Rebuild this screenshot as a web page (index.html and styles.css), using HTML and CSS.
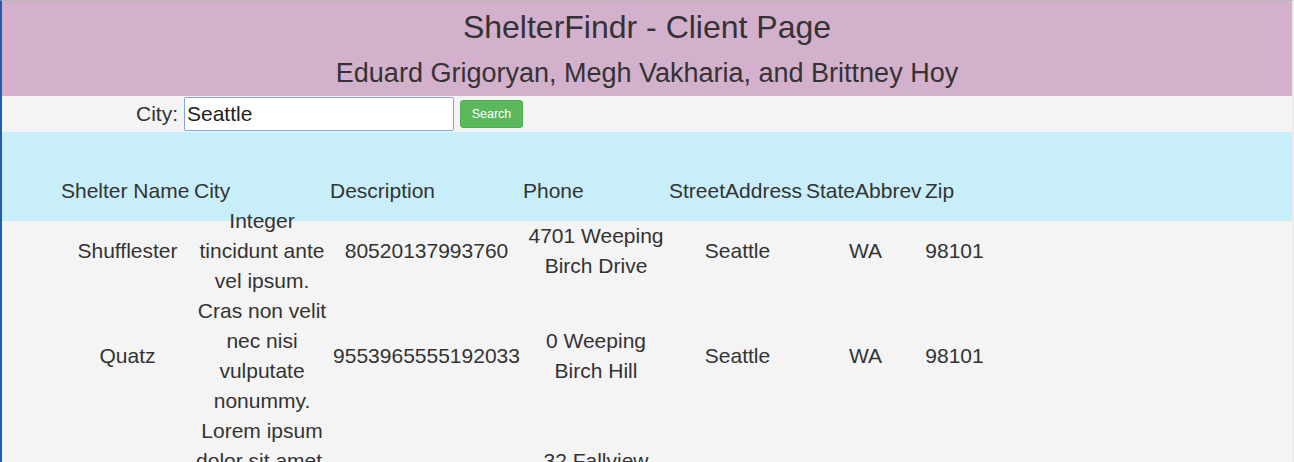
FILE: index.html
```html
<!DOCTYPE html>
<html lang="en">
<head>
<meta charset="utf-8">
<title>ShelterFindr - Client Page</title>
<link rel="stylesheet" href="styles.css">
</head>
<body>
<div class="frame">
  <header class="masthead">
    <h1 class="title">ShelterFindr - Client Page</h1>
    <h2 class="authors">Eduard Grigoryan, Megh Vakharia, and Brittney Hoy</h2>
  </header>
  <form class="search">
    <label class="search-label" for="city">City:</label>
    <input class="search-input" id="city" type="text" value="Seattle">
    <button class="search-btn" type="button">Search</button>
  </form>
  <section class="results">
    <table class="shelters">
      <colgroup>
        <col class="c-name"><col class="c-city"><col class="c-desc"><col class="c-phone"><col class="c-street"><col class="c-state"><col class="c-zip">
      </colgroup>
      <thead>
        <tr>
          <th>Shelter Name</th><th>City</th><th>Description</th><th>Phone</th><th>StreetAddress</th><th>StateAbbrev</th><th>Zip</th>
        </tr>
      </thead>
      <tbody>
        <tr>
          <td>Shufflester</td><td>Integer tincidunt ante vel ipsum.</td><td>80520137993760</td><td>4701 Weeping Birch Drive</td><td>Seattle</td><td>WA</td><td>98101</td>
        </tr>
        <tr>
          <td>Quatz</td><td>Cras non velit nec nisi vulputate nonummy.</td><td>9553965555192033</td><td>0 Weeping Birch Hill</td><td>Seattle</td><td>WA</td><td>98101</td>
        </tr>
        <tr>
          <td>Voyatouch</td><td>Lorem ipsum dolor sit amet, consectetuer adipiscing elit.</td><td>4017953521</td><td>32 Fallview Court</td><td>Seattle</td><td>WA</td><td>98101</td>
        </tr>
      </tbody>
    </table>
  </section>
</div>
</body>
</html>
```
FILE: styles.css
```css
html {
  overflow: hidden;
}

body {
  margin: 0;
  background: #f4f4f4;
  font-family: "Liberation Sans", Arial, sans-serif;
  color: #333333;
}

.frame {
  border-top: 1px solid #b9b9b9;
  border-left: 2px solid #1f5cb8;
  border-right: 2px solid #eeeaee;
  min-height: 461px;
  background: #f4f4f4;
}

.masthead {
  background: #d3b0cc;
  text-align: center;
  padding: 9px 0 8px;
}

.title {
  margin: 0;
  font-size: 32px;
  font-weight: normal;
  line-height: 35px;
}

.authors {
  margin: 13px 0 0;
  font-size: 27px;
  font-weight: normal;
  line-height: 30px;
}

.search {
  display: flex;
  align-items: center;
  gap: 6px;
  height: 36px;
  padding-left: 134px;
  margin: 0;
}

.search-label {
  font-size: 21px;
  line-height: 30px;
}

.search-input {
  box-sizing: border-box;
  width: 270px;
  height: 34px;
  margin: 0;
  padding: 0 2px;
  border: 1px solid #7ea6e6;
  border-radius: 2px;
  background: #ffffff;
  font-family: "Liberation Sans", Arial, sans-serif;
  font-size: 21px;
  color: #222222;
  outline: none;
}

.search-btn {
  box-sizing: border-box;
  height: 28px;
  width: 63px;
  padding: 0;
  border: 1px solid #4cae4c;
  border-radius: 3px;
  background: #5cb85c;
  color: #ffffff;
  font-family: "Liberation Sans", Arial, sans-serif;
  font-size: 12.5px;
}

.results {
  background: linear-gradient(#c8eef9 0, #c8eef9 89px, #f4f4f4 89px);
  padding-left: 59px;
}

.shelters {
  table-layout: fixed;
  width: 923px;
  border-collapse: collapse;
  font-size: 21px;
  line-height: 30px;
}

.c-name { width: 133px; }
.c-city { width: 136px; }
.c-desc { width: 193px; }
.c-phone { width: 146px; }
.c-street { width: 137px; }
.c-state { width: 119px; }
.c-zip { width: 59px; }

.shelters th {
  padding: 44px 0 0;
  text-align: left;
  font-weight: normal;
  white-space: nowrap;
  vertical-align: bottom;
}

.shelters td {
  padding: 0;
  text-align: center;
  vertical-align: middle;
}
```
